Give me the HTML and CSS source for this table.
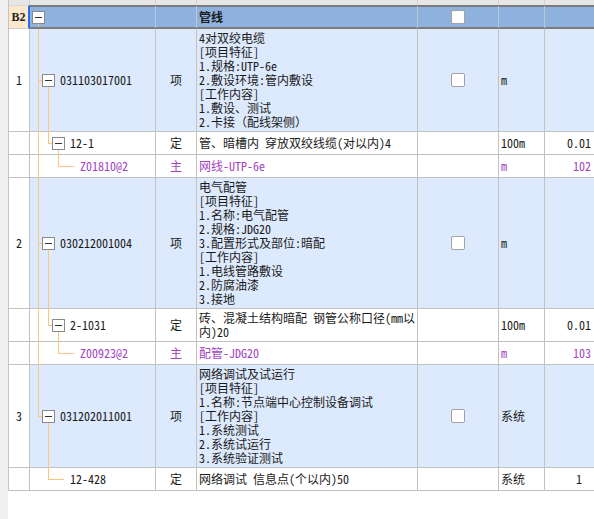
FILE: index.html
```html
<!DOCTYPE html>
<html lang="zh-CN">
<head>
<meta charset="utf-8">
<title>清单</title>
<link rel="stylesheet" href="styles.css">
</head>
<body>
<div class="page">
  <div class="gutter"></div>
  <div class="sheet">
    <div class="row head">
      <div class="c"></div><div class="c"></div><div class="c"></div><div class="c"></div><div class="c"></div><div class="c"></div><div class="c"></div>
    </div>

    <div class="row group">
      <div class="c no b2">B2</div>
      <div class="c code lv0"><span class="ln t-low"></span><span class="box"></span></div>
      <div class="c type"></div>
      <div class="c name"><b class="title">管线</b></div>
      <div class="c chkc"><span class="chk"></span></div>
      <div class="c unit"></div>
      <div class="c qty"></div>
    </div>

    <div class="row item">
      <div class="c no">1</div>
      <div class="c code lv1"><span class="ln t-full"></span><span class="ln h1"></span><span class="ln l1-low"></span><span class="box"></span><span class="txt">031103017001</span></div>
      <div class="c type">项</div>
      <div class="c name"><div>4对双绞电缆<br>[项目特征]<br>1.规格:UTP-6e<br>2.敷设环境:管内敷设<br>[工作内容]<br>1.敷设、测试<br>2.卡接（配线架侧）</div></div>
      <div class="c chkc"><span class="chk"></span></div>
      <div class="c unit">m</div>
      <div class="c qty"></div>
    </div>

    <div class="row sub">
      <div class="c no"></div>
      <div class="c code lv2"><span class="ln t-full"></span><span class="ln l1-top"></span><span class="ln h2"></span><span class="ln l2-low"></span><span class="box"></span><span class="txt">12-1</span></div>
      <div class="c type">定</div>
      <div class="c name"><div>管、暗槽内 穿放双绞线缆(对以内)4</div></div>
      <div class="c chkc"></div>
      <div class="c unit">100m</div>
      <div class="c qty">0.01</div>
    </div>

    <div class="row sub p">
      <div class="c no"></div>
      <div class="c code lv3"><span class="ln t-full"></span><span class="ln l2-top"></span><span class="ln h3"></span><span class="txt">Z01810@2</span></div>
      <div class="c type">主</div>
      <div class="c name"><div>网线-UTP-6e</div></div>
      <div class="c chkc"></div>
      <div class="c unit">m</div>
      <div class="c qty">102</div>
    </div>

    <div class="row item">
      <div class="c no">2</div>
      <div class="c code lv1"><span class="ln t-full"></span><span class="ln h1"></span><span class="ln l1-low"></span><span class="box"></span><span class="txt">030212001004</span></div>
      <div class="c type">项</div>
      <div class="c name"><div>电气配管<br>[项目特征]<br>1.名称:电气配管<br>2.规格:JDG20<br>3.配置形式及部位:暗配<br>[工作内容]<br>1.电线管路敷设<br>2.防腐油漆<br>3.接地</div></div>
      <div class="c chkc"><span class="chk"></span></div>
      <div class="c unit">m</div>
      <div class="c qty"></div>
    </div>

    <div class="row sub">
      <div class="c no"></div>
      <div class="c code lv2"><span class="ln t-full"></span><span class="ln l1-top"></span><span class="ln h2"></span><span class="ln l2-low"></span><span class="box"></span><span class="txt">2-1031</span></div>
      <div class="c type">定</div>
      <div class="c name"><div>砖、混凝土结构暗配 钢管公称口径(mm以<br>内)20</div></div>
      <div class="c chkc"></div>
      <div class="c unit">100m</div>
      <div class="c qty">0.01</div>
    </div>

    <div class="row sub p">
      <div class="c no"></div>
      <div class="c code lv3"><span class="ln t-full"></span><span class="ln l2-top"></span><span class="ln h3"></span><span class="txt">Z00923@2</span></div>
      <div class="c type">主</div>
      <div class="c name"><div>配管-JDG20</div></div>
      <div class="c chkc"></div>
      <div class="c unit">m</div>
      <div class="c qty">103</div>
    </div>

    <div class="row item">
      <div class="c no">3</div>
      <div class="c code lv1"><span class="ln t-top"></span><span class="ln h1"></span><span class="ln l1-low"></span><span class="box"></span><span class="txt">031202011001</span></div>
      <div class="c type">项</div>
      <div class="c name"><div>网络调试及试运行<br>[项目特征]<br>1.名称:节点端中心控制设备调试<br>[工作内容]<br>1.系统测试<br>2.系统试运行<br>3.系统验证测试</div></div>
      <div class="c chkc"><span class="chk"></span></div>
      <div class="c unit">系统</div>
      <div class="c qty"></div>
    </div>

    <div class="row sub">
      <div class="c no"></div>
      <div class="c code lv2leaf"><span class="ln l1-top"></span><span class="ln h2-long"></span><span class="txt">12-428</span></div>
      <div class="c type">定</div>
      <div class="c name"><div>网络调试 信息点(个以内)50</div></div>
      <div class="c chkc"></div>
      <div class="c unit">系统</div>
      <div class="c qty qty-one">1</div>
    </div>
  </div>
</div>
</body>
</html>
```
FILE: styles.css
```css
* { box-sizing: border-box; margin: 0; padding: 0; }
html, body { height: 100%; overflow: hidden; background: #ffffff; }
body {
  font-family: "Noto Sans Mono CJK SC", "Noto Sans CJK SC", sans-serif;
  font-size: 12px;
  line-height: 14px;
  color: #1a1a1a;
}
.page { display: flex; height: 100%; }
.gutter { width: 8px; flex: none; background: #f0f0f0; }
.sheet { flex: none; border-left: 1px solid #c4c4c4; align-self: flex-start; }

.row {
  display: grid;
  grid-template-columns: 21px 126px 41px 221px 81px 46px 50px;
}
.c {
  position: relative;
  display: flex;
  align-items: center;
  min-height: 23px;
  border-right: 1px solid #c2c2c2;
  border-bottom: 1px solid #c2c2c2;
  white-space: nowrap;
}

/* header strip */
.head .c {
  min-height: 5px;
  height: 5px;
  background: #e6e6e6;
  border-bottom: none;
  border-right-color: #d0d0d0;
}

/* group row */
.group .c {
  min-height: 24px;
  background: #8fb1dd;
  border-top: 2px solid #7c7c7c;
  border-bottom: 2px solid #7c7c7c;
  border-right-color: #b9c7dc;
}
.group .b2 {
  background: #fde8cb;
  border-top: 1px solid #d8d8d8;
  border-bottom: 1px solid #d0d0d0;
  border-right: 2px solid #2a6ef0;
  justify-content: center;
  font-family: "Liberation Serif", serif;
  font-weight: bold;
  font-size: 12px;
  color: #222;
}
.title { font-weight: bold; font-size: 12px; color: #1a1a1a; }

/* item rows */
.item .c { background: #dde9fc; }
.item .no, .sub .no { background: #ffffff; }
.sub .c { background: #ffffff; }
.p .type, .p .name, .p .unit, .p .qty, .p .txt { color: #a243c2; }

.no { justify-content: center; }
.type { justify-content: center; }
.name { padding: 2px 2px; }
.chkc { justify-content: center; }
.unit { padding-left: 2px; }
.qty { justify-content: flex-end; padding-right: 3px; }
.qty-one { padding-right: 12px; }

/* tree */
.lv0 { padding-left: 2px; }
.lv1 { padding-left: 12px; }
.lv2 { padding-left: 22px; }
.lv2leaf { padding-left: 40px; }
.lv3 { padding-left: 50px; }

.box {
  position: relative;
  z-index: 1;
  flex: none;
  width: 13px;
  height: 13px;
  border: 1px solid #8a8a8a;
  background: #ffffff;
}
.box::before {
  content: "";
  position: absolute;
  left: 2px;
  top: 5px;
  width: 7px;
  height: 1px;
  background: #333333;
}
.txt { margin-left: 5px; }
.lv2leaf .txt, .lv3 .txt { margin-left: 0; }

.ln { position: absolute; background: #ffc47e; }
.t-full { left: 8px; top: 0; bottom: -1px; width: 1px; }
.t-top { left: 8px; top: 0; height: 50%; width: 1px; }
.t-low { left: 8px; top: 50%; bottom: 0; width: 1px; }
.h1 { left: 8px; top: 50%; width: 4px; height: 1px; }
.l1-low { left: 18px; top: 50%; bottom: -1px; width: 1px; }
.l1-top { left: 18px; top: 0; height: 50%; width: 1px; }
.h2 { left: 18px; top: 50%; width: 4px; height: 1px; }
.h2-long { left: 18px; top: 50%; width: 16px; height: 1px; }
.l2-low { left: 28px; top: 50%; bottom: -1px; width: 1px; }
.l2-top { left: 28px; top: 0; height: 50%; width: 1px; }
.h3 { left: 28px; top: 50%; width: 16px; height: 1px; }

.chk {
  width: 14px;
  height: 14px;
  border: 1px solid #a2a2a2;
  border-radius: 2px;
  background: #ffffff;
}
```
